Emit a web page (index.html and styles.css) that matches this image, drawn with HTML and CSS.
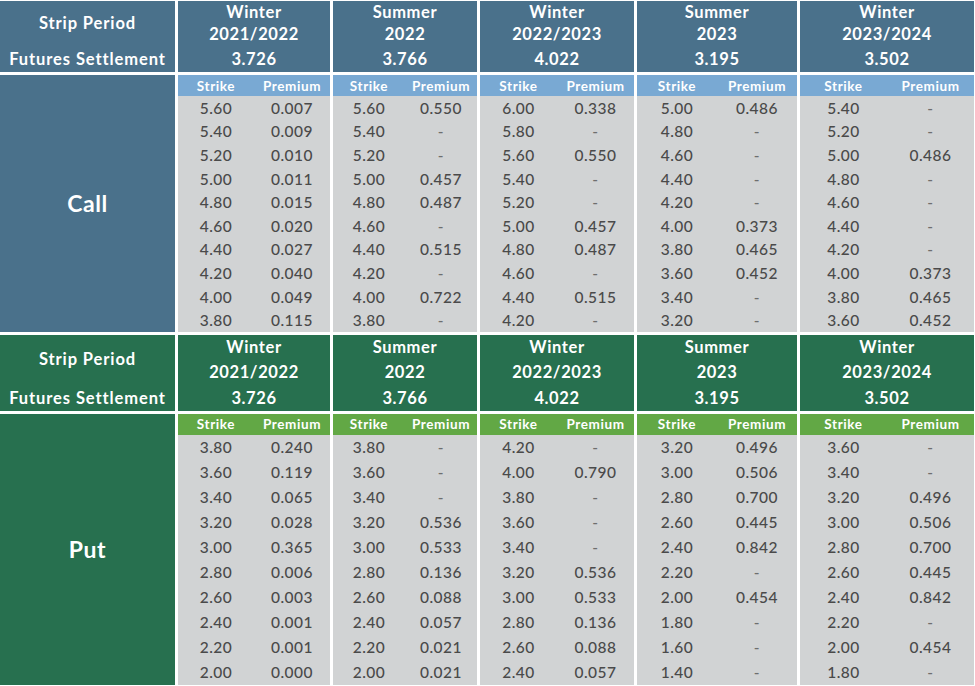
FILE: index.html
```html
<!DOCTYPE html>
<html lang="en">
<head>
<meta charset="utf-8">
<title>Options Strip</title>
<link rel="stylesheet" href="styles.css">
</head>
<body>
<div class="page">
  <section class="block call">
    <div class="hd label">
      <div class="top">Strip Period</div>
      <div class="bot">Futures Settlement</div>
    </div>
    <div class="hd"><div class="top"><span>Winter</span><span>2021/2022</span></div><div class="bot">3.726</div></div>
    <div class="hd"><div class="top"><span>Summer</span><span>2022</span></div><div class="bot">3.766</div></div>
    <div class="hd"><div class="top"><span>Winter</span><span>2022/2023</span></div><div class="bot">4.022</div></div>
    <div class="hd"><div class="top"><span>Summer</span><span>2023</span></div><div class="bot">3.195</div></div>
    <div class="hd"><div class="top"><span>Winter</span><span>2023/2024</span></div><div class="bot">3.502</div></div>

    <div class="side">Call</div>
    <div class="col">
      <div class="sub"><span>Strike</span><span>Premium</span></div>
      <div class="r"><span>5.60</span><span>0.007</span></div>
      <div class="r"><span>5.40</span><span>0.009</span></div>
      <div class="r"><span>5.20</span><span>0.010</span></div>
      <div class="r"><span>5.00</span><span>0.011</span></div>
      <div class="r"><span>4.80</span><span>0.015</span></div>
      <div class="r"><span>4.60</span><span>0.020</span></div>
      <div class="r"><span>4.40</span><span>0.027</span></div>
      <div class="r"><span>4.20</span><span>0.040</span></div>
      <div class="r"><span>4.00</span><span>0.049</span></div>
      <div class="r"><span>3.80</span><span>0.115</span></div>
    </div>
    <div class="col">
      <div class="sub"><span>Strike</span><span>Premium</span></div>
      <div class="r"><span>5.60</span><span>0.550</span></div>
      <div class="r"><span>5.40</span><span class="na">-</span></div>
      <div class="r"><span>5.20</span><span class="na">-</span></div>
      <div class="r"><span>5.00</span><span>0.457</span></div>
      <div class="r"><span>4.80</span><span>0.487</span></div>
      <div class="r"><span>4.60</span><span class="na">-</span></div>
      <div class="r"><span>4.40</span><span>0.515</span></div>
      <div class="r"><span>4.20</span><span class="na">-</span></div>
      <div class="r"><span>4.00</span><span>0.722</span></div>
      <div class="r"><span>3.80</span><span class="na">-</span></div>
    </div>
    <div class="col">
      <div class="sub"><span>Strike</span><span>Premium</span></div>
      <div class="r"><span>6.00</span><span>0.338</span></div>
      <div class="r"><span>5.80</span><span class="na">-</span></div>
      <div class="r"><span>5.60</span><span>0.550</span></div>
      <div class="r"><span>5.40</span><span class="na">-</span></div>
      <div class="r"><span>5.20</span><span class="na">-</span></div>
      <div class="r"><span>5.00</span><span>0.457</span></div>
      <div class="r"><span>4.80</span><span>0.487</span></div>
      <div class="r"><span>4.60</span><span class="na">-</span></div>
      <div class="r"><span>4.40</span><span>0.515</span></div>
      <div class="r"><span>4.20</span><span class="na">-</span></div>
    </div>
    <div class="col">
      <div class="sub"><span>Strike</span><span>Premium</span></div>
      <div class="r"><span>5.00</span><span>0.486</span></div>
      <div class="r"><span>4.80</span><span class="na">-</span></div>
      <div class="r"><span>4.60</span><span class="na">-</span></div>
      <div class="r"><span>4.40</span><span class="na">-</span></div>
      <div class="r"><span>4.20</span><span class="na">-</span></div>
      <div class="r"><span>4.00</span><span>0.373</span></div>
      <div class="r"><span>3.80</span><span>0.465</span></div>
      <div class="r"><span>3.60</span><span>0.452</span></div>
      <div class="r"><span>3.40</span><span class="na">-</span></div>
      <div class="r"><span>3.20</span><span class="na">-</span></div>
    </div>
    <div class="col">
      <div class="sub"><span>Strike</span><span>Premium</span></div>
      <div class="r"><span>5.40</span><span class="na">-</span></div>
      <div class="r"><span>5.20</span><span class="na">-</span></div>
      <div class="r"><span>5.00</span><span>0.486</span></div>
      <div class="r"><span>4.80</span><span class="na">-</span></div>
      <div class="r"><span>4.60</span><span class="na">-</span></div>
      <div class="r"><span>4.40</span><span class="na">-</span></div>
      <div class="r"><span>4.20</span><span class="na">-</span></div>
      <div class="r"><span>4.00</span><span>0.373</span></div>
      <div class="r"><span>3.80</span><span>0.465</span></div>
      <div class="r"><span>3.60</span><span>0.452</span></div>
    </div>
  </section>

  <section class="block put">
    <div class="hd label">
      <div class="top">Strip Period</div>
      <div class="bot">Futures Settlement</div>
    </div>
    <div class="hd"><div class="top"><span>Winter</span><span>2021/2022</span></div><div class="bot">3.726</div></div>
    <div class="hd"><div class="top"><span>Summer</span><span>2022</span></div><div class="bot">3.766</div></div>
    <div class="hd"><div class="top"><span>Winter</span><span>2022/2023</span></div><div class="bot">4.022</div></div>
    <div class="hd"><div class="top"><span>Summer</span><span>2023</span></div><div class="bot">3.195</div></div>
    <div class="hd"><div class="top"><span>Winter</span><span>2023/2024</span></div><div class="bot">3.502</div></div>

    <div class="side">Put</div>
    <div class="col">
      <div class="sub"><span>Strike</span><span>Premium</span></div>
      <div class="r"><span>3.80</span><span>0.240</span></div>
      <div class="r"><span>3.60</span><span>0.119</span></div>
      <div class="r"><span>3.40</span><span>0.065</span></div>
      <div class="r"><span>3.20</span><span>0.028</span></div>
      <div class="r"><span>3.00</span><span>0.365</span></div>
      <div class="r"><span>2.80</span><span>0.006</span></div>
      <div class="r"><span>2.60</span><span>0.003</span></div>
      <div class="r"><span>2.40</span><span>0.001</span></div>
      <div class="r"><span>2.20</span><span>0.001</span></div>
      <div class="r"><span>2.00</span><span>0.000</span></div>
    </div>
    <div class="col">
      <div class="sub"><span>Strike</span><span>Premium</span></div>
      <div class="r"><span>3.80</span><span class="na">-</span></div>
      <div class="r"><span>3.60</span><span class="na">-</span></div>
      <div class="r"><span>3.40</span><span class="na">-</span></div>
      <div class="r"><span>3.20</span><span>0.536</span></div>
      <div class="r"><span>3.00</span><span>0.533</span></div>
      <div class="r"><span>2.80</span><span>0.136</span></div>
      <div class="r"><span>2.60</span><span>0.088</span></div>
      <div class="r"><span>2.40</span><span>0.057</span></div>
      <div class="r"><span>2.20</span><span>0.021</span></div>
      <div class="r"><span>2.00</span><span>0.021</span></div>
    </div>
    <div class="col">
      <div class="sub"><span>Strike</span><span>Premium</span></div>
      <div class="r"><span>4.20</span><span class="na">-</span></div>
      <div class="r"><span>4.00</span><span>0.790</span></div>
      <div class="r"><span>3.80</span><span class="na">-</span></div>
      <div class="r"><span>3.60</span><span class="na">-</span></div>
      <div class="r"><span>3.40</span><span class="na">-</span></div>
      <div class="r"><span>3.20</span><span>0.536</span></div>
      <div class="r"><span>3.00</span><span>0.533</span></div>
      <div class="r"><span>2.80</span><span>0.136</span></div>
      <div class="r"><span>2.60</span><span>0.088</span></div>
      <div class="r"><span>2.40</span><span>0.057</span></div>
    </div>
    <div class="col">
      <div class="sub"><span>Strike</span><span>Premium</span></div>
      <div class="r"><span>3.20</span><span>0.496</span></div>
      <div class="r"><span>3.00</span><span>0.506</span></div>
      <div class="r"><span>2.80</span><span>0.700</span></div>
      <div class="r"><span>2.60</span><span>0.445</span></div>
      <div class="r"><span>2.40</span><span>0.842</span></div>
      <div class="r"><span>2.20</span><span class="na">-</span></div>
      <div class="r"><span>2.00</span><span>0.454</span></div>
      <div class="r"><span>1.80</span><span class="na">-</span></div>
      <div class="r"><span>1.60</span><span class="na">-</span></div>
      <div class="r"><span>1.40</span><span class="na">-</span></div>
    </div>
    <div class="col">
      <div class="sub"><span>Strike</span><span>Premium</span></div>
      <div class="r"><span>3.60</span><span class="na">-</span></div>
      <div class="r"><span>3.40</span><span class="na">-</span></div>
      <div class="r"><span>3.20</span><span>0.496</span></div>
      <div class="r"><span>3.00</span><span>0.506</span></div>
      <div class="r"><span>2.80</span><span>0.700</span></div>
      <div class="r"><span>2.60</span><span>0.445</span></div>
      <div class="r"><span>2.40</span><span>0.842</span></div>
      <div class="r"><span>2.20</span><span class="na">-</span></div>
      <div class="r"><span>2.00</span><span>0.454</span></div>
      <div class="r"><span>1.80</span><span class="na">-</span></div>
    </div>
  </section>
</div>
</body>
</html>
```

FILE: styles.css
```css
* { box-sizing: border-box; }

html, body {
  margin: 0;
  padding: 0;
  background: #ffffff;
  overflow: hidden;
}

body {
  font-family: "Lato", "Noto Sans", "Liberation Sans", sans-serif;
  color: #4d4d4d;
}

.page {
  padding-top: 1px;
  display: flex;
  flex-direction: column;
  gap: 3px;
  width: 975px;
}

.block {
  display: grid;
  grid-template-columns: 175px 152px 144px 154px 160px 174px;
  column-gap: 3px;
  row-gap: 3px;
}

.call { --dark: #4a718b; --light: #79a9d3; }
.put  { --dark: #27704f; --light: #62a845; }

.hd {
  background: var(--dark);
  color: #ffffff;
  font-weight: 700;
  font-size: 16.5px;
  letter-spacing: 0.6px;
  display: flex;
  flex-direction: column;
  text-align: center;
}

.hd .top {
  display: flex;
  flex-direction: column;
  align-items: center;
  justify-content: center;
}

.hd .bot {
  display: flex;
  align-items: center;
  justify-content: center;
}

.call .hd .top { height: 44px; line-height: 22px; }
.call .hd .bot { height: 27px; }
.put .hd .top { height: 50px; line-height: 25px; }
.put .hd .bot { height: 26px; }

.hd.label {
  font-size: 16.5px;
  letter-spacing: 0.9px;
}

.side {
  background: var(--dark);
  color: #ffffff;
  font-weight: 700;
  font-size: 23px;
  letter-spacing: 0.6px;
  display: flex;
  align-items: center;
  justify-content: center;
}

.col {
  background: #d1d3d4;
  display: flex;
  flex-direction: column;
}

.sub {
  background: var(--light);
  color: #ffffff;
  font-weight: 700;
  font-size: 13.5px;
  letter-spacing: 0.6px;
  height: 21px;
  display: grid;
  grid-template-columns: 1fr 1fr;
  align-items: center;
  text-align: center;
}

.r {
  display: grid;
  grid-template-columns: 1fr 1fr;
  align-items: center;
  text-align: center;
  font-size: 15.5px;
  font-weight: 500;
  letter-spacing: 0.5px;
  color: #4a4a4a;
}

.call .r { height: 23.6px; }
.put .r { height: 25px; }

.r .na { color: #6e6e6e; }
```
